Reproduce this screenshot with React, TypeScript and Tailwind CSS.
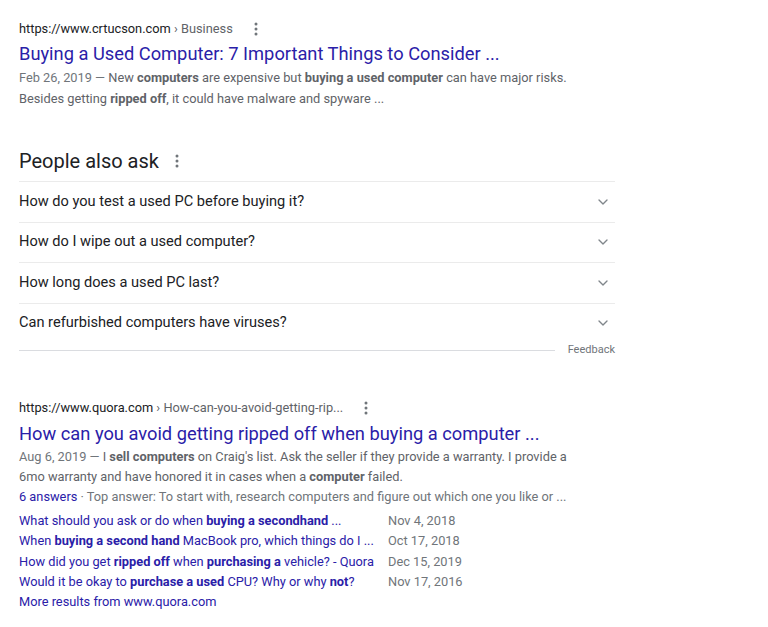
import { ChevronDown } from "lucide-react";

const font = { fontFamily: "Roboto, 'Liberation Sans', sans-serif" };

function Dots() {
  return (
    <svg width="4" height="14" viewBox="0 0 4 14" className="fill-[#70757a]">
      <circle cx="2" cy="2" r="1.5" />
      <circle cx="2" cy="7" r="1.5" />
      <circle cx="2" cy="12" r="1.5" />
    </svg>
  );
}

function Url({ site, path }: { site: string; path: string }) {
  return (
    <div className="flex items-center h-[20px] text-[12.8px] leading-[20px]">
      <span className="text-[#202124]">{site}</span>
      <span className="text-[#5f6368]">&nbsp;› {path}</span>
      <span className="ml-[21px] flex items-center">
        <Dots />
      </span>
    </div>
  );
}

export default function App() {
  const questions = [
    "How do you test a used PC before buying it?",
    "How do I wipe out a used computer?",
    "How long does a used PC last?",
    "Can refurbished computers have viruses?",
  ];

  const subs: { parts: [string, boolean][]; date: string }[] = [
    {
      parts: [
        ["What should you ask or do when ", false],
        ["buying a secondhand", true],
        [" ...", false],
      ],
      date: "Nov 4, 2018",
    },
    {
      parts: [
        ["When ", false],
        ["buying a second hand", true],
        [" MacBook pro, which things do I ...", false],
      ],
      date: "Oct 17, 2018",
    },
    {
      parts: [
        ["How did you get ", false],
        ["ripped off", true],
        [" when ", false],
        ["purchasing a", true],
        [" vehicle? - Quora", false],
      ],
      date: "Dec 15, 2019",
    },
    {
      parts: [
        ["Would it be okay to ", false],
        ["purchase a used", true],
        [" CPU? Why or why ", false],
        ["not", true],
        ["?", false],
      ],
      date: "Nov 17, 2016",
    },
  ];

  return (
    <div className="w-[768px] h-[627px] bg-white overflow-hidden" style={font}>
      <div className="pl-[19px] pt-[19px] w-[615px]">
        {/* result 1 */}
        <Url site="https://www.crtucson.com" path="Business" />
        <div className="text-[18.3px] leading-[26px] text-[#2a20a8] mt-[2px]">
          Buying a Used Computer: 7 Important Things to Consider ...
        </div>
        <div className="text-[12.8px] leading-[21px] text-[#5f6368]">
          <div>
            <span className="text-[#70757a]">Feb 26, 2019 — </span>New{" "}
            <b className="font-bold">computers</b> are expensive but{" "}
            <b className="font-bold">buying a used computer</b> can have major risks.
          </div>
          <div>
            Besides getting <b className="font-bold">ripped off</b>, it could have malware and spyware ...
          </div>
        </div>

        {/* people also ask */}
        <div className="mt-[37px]">
          <div className="flex items-center h-[30px] pb-[5px] box-content">
            <span className="text-[20px] leading-[30px] text-[#202124]">People also ask</span>
            <span className="ml-[16px] flex items-center">
              <Dots />
            </span>
          </div>
          {questions.map((q) => (
            <div
              key={q}
              className="flex items-center justify-between h-[40.5px] border-t border-[#ebebeb] text-[14.6px] text-[#202124]"
            >
              <span>{q}</span>
              <ChevronDown className="w-[16px] h-[16px] text-[#80868b] mr-[4px]" strokeWidth={2} />
            </div>
          ))}
          <div className="flex items-center mt-[1px]">
            <div className="flex-1 h-px bg-[#dadce0]" />
            <span className="ml-[13px] text-[11px] text-[#70757a] leading-[12px]">Feedback</span>
          </div>
        </div>

        {/* result 2 */}
        <div className="mt-[42px]">
          <Url site="https://www.quora.com" path="How-can-you-avoid-getting-rip..." />
          <div className="text-[18.3px] leading-[26px] text-[#2a20a8] mt-[3px]">
            How can you avoid getting ripped off when buying a computer ...
          </div>
          <div className="text-[12.8px] leading-[20px] text-[#5f6368]">
            <div>
              <span className="text-[#70757a]">Aug 6, 2019 — </span>I{" "}
              <b className="font-bold">sell computers</b> on Craig's list. Ask the seller if they provide a
              warranty. I provide a
            </div>
            <div>
              6mo warranty and have honored it in cases when a <b className="font-bold">computer</b> failed.
            </div>
          </div>
          <div className="text-[12.8px] leading-[20px] text-[#70757a]">
            <span className="text-[#2a20a8]">6 answers</span> · Top answer: To start with, research
            computers and figure out which one you like or ...
          </div>
          <div className="mt-[4px]">
            {subs.map((s) => (
              <div key={s.date} className="flex text-[12.8px] leading-[20.25px]">
                <span className="w-[369px] text-[#2a20a8]">
                  {s.parts.map(([t, b], i) =>
                    b ? (
                      <b key={i} className="font-bold">
                        {t}
                      </b>
                    ) : (
                      <span key={i}>{t}</span>
                    )
                  )}
                </span>
                <span className="text-[#70757a]">{s.date}</span>
              </div>
            ))}
            <div className="text-[12.8px] leading-[20.25px] text-[#2a20a8]">More results from www.quora.com</div>
          </div>
        </div>
      </div>
    </div>
  );
}
